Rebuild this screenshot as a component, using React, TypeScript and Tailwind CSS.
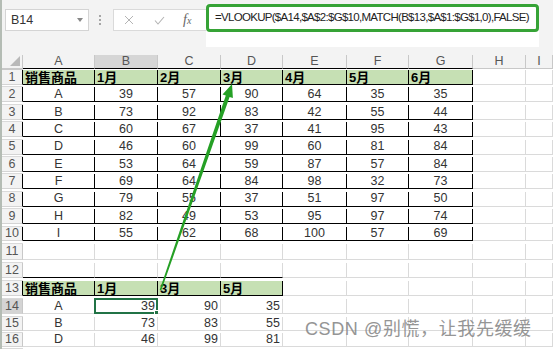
import React from 'react';

const COLS = ['A', 'B', 'C', 'D', 'E', 'F', 'G', 'H', 'I'];

const DATA: (string | number)[][] = [
  ['A', 39, 57, 90, 64, 35, 35],
  ['B', 73, 92, 83, 42, 55, 44],
  ['C', 60, 67, 37, 41, 95, 43],
  ['D', 46, 60, 99, 60, 81, 84],
  ['E', 53, 64, 59, 87, 57, 84],
  ['F', 69, 64, 84, 98, 32, 73],
  ['G', 79, 55, 37, 51, 97, 50],
  ['H', 82, 49, 53, 95, 97, 74],
  ['I', 55, 62, 68, 100, 57, 69],
];

const LOOKUP: (string | number)[][] = [
  ['A', 39, 90, 35],
  ['B', 73, 83, 55],
  ['D', 46, 99, 81],
];

const HEAD_TOP = ['销售商品', '1月', '2月', '3月', '4月', '5月', '6月'];
const HEAD_BOTTOM = ['销售商品', '1月', '3月', '5月'];

const GRID = 'grid grid-cols-[21px_72px_63px_63px_62px_64px_62px_64px_53px_1fr]';

function rowHeight(r: number) {
  if (r <= 10) return 'h-[17.4px]';
  if (r === 11) return 'h-[19px]';
  if (r <= 14) return 'h-[18px]';
  return 'h-[16px]';
}

function Cell({ r, c }: { r: number; c: number }) {
  const inTop = r <= 10 && c <= 6;
  const inBottom = r === 13 && c <= 3;
  const boxed = inTop || inBottom;
  const header = (r === 1 && c <= 6) || inBottom;
  const rightColor = boxed ? 'border-r-black' : 'border-r-[#dadada]';
  const bottomColor = boxed || (r === 12 && c <= 3) ? 'border-b-black' : 'border-b-[#dadada]';
  const bg = header ? 'bg-[#c6e0b4]' : 'bg-white';

  let content: React.ReactNode = null;
  let align = 'justify-center';
  if (r === 1 && c <= 6) {
    content = HEAD_TOP[c];
    align = 'justify-start pl-[2px] font-bold text-[13px] text-black';
  } else if (r >= 2 && r <= 10 && c <= 6) {
    content = DATA[r - 2][c];
  } else if (inBottom) {
    content = HEAD_BOTTOM[c];
    align = 'justify-start pl-[2px] font-bold text-[13px] text-black';
  } else if (r >= 14 && r <= 16 && c <= 3) {
    content = LOOKUP[r - 14][c];
    if (c > 0) align = 'justify-end pr-[2px]';
  }

  return (
    <div className={`relative flex items-center border-r border-b ${rightColor} ${bottomColor} ${bg} ${align}`}>
      <span className="leading-none">{content}</span>
      {r === 14 && c === 1 && (
        <div className="absolute -left-px -top-px -right-px -bottom-px border-2 border-[#217346]">
          <div className="absolute -right-[3px] -bottom-[3px] w-[5px] h-[5px] bg-[#217346] border border-white" />
        </div>
      )}
    </div>
  );
}

function Row({ r }: { r: number }) {
  const headBorder = r <= 10 || r === 13 ? 'border-r-black' : 'border-r-[#c8c8c8]';
  const headBg = r === 14 ? 'bg-[#d4d4d4]' : 'bg-[#f3f3f3]';
  return (
    <div className={`${GRID} ${rowHeight(r)}`}>
      <div className={`flex items-center justify-center border-r border-b border-b-[#d4d4d4] ${headBorder} ${headBg} text-[12.5px] text-[#555] leading-none`}>
        {r}
      </div>
      {COLS.map((_, c) => (
        <Cell key={c} r={r} c={c} />
      ))}
      <div className="border-b border-b-[#dadada] bg-white" />
    </div>
  );
}

function ColumnHeader() {
  return (
    <div className={`${GRID} h-[15px]`}>
      <div className="relative border-r border-b border-[#c8c8c8] bg-[#f3f3f3]">
        <svg className="absolute right-[2px] bottom-[2px]" width="10" height="10" viewBox="0 0 10 10">
          <polygon points="10,0 10,10 0,10" fill="#b9b9b9" />
        </svg>
      </div>
      {COLS.map((col, c) => (
        <div
          key={col}
          className={`flex items-center justify-center border-r border-b text-[12.5px] leading-none text-[#555] ${
            c === 1 ? 'bg-[#d6d6d6]' : 'bg-[#f3f3f3]'
          } ${c <= 6 ? 'border-b-black border-r-[#c8c8c8]' : 'border-[#c8c8c8]'}`}
        >
          {col}
        </div>
      ))}
      <div className="border-b border-[#c8c8c8] bg-[#f3f3f3]" />
    </div>
  );
}

function Toolbar() {
  return (
    <div className="flex h-[55px] items-start bg-[#f3f3f3]">
      <div className="ml-[3px] mt-[9px] flex h-[22px] w-[84px] items-center justify-between border border-[#d4d4d4] bg-white pl-[5px] pr-[5px]">
        <span className="text-[12.5px] leading-none text-[#333]">B14</span>
        <svg width="6" height="4" viewBox="0 0 6 4">
          <polygon points="0,0 6,0 3,4" fill="#888" />
        </svg>
      </div>
      <div className="ml-[10px] mt-[15px] flex flex-col gap-[2px]">
        <div className="h-[2px] w-[2px] bg-[#a6a6a6]" />
        <div className="h-[2px] w-[2px] bg-[#a6a6a6]" />
        <div className="h-[2px] w-[2px] bg-[#a6a6a6]" />
      </div>
      <div className="ml-[12px] mt-[9px] flex h-[22px] w-[93px] items-center border border-r-0 border-[#dadada] bg-white">
        <svg className="ml-[10px]" width="10" height="10" viewBox="0 0 10 10">
          <path d="M1 1 L9 9 M9 1 L1 9" stroke="#b4b4b4" strokeWidth="1" fill="none" />
        </svg>
        <svg className="ml-[20px]" width="11" height="9" viewBox="0 0 11 9">
          <path d="M1 4.5 L4 8 L10 1" stroke="#b4b4b4" strokeWidth="1.1" fill="none" />
        </svg>
        <span className="ml-[18px] font-['Liberation_Serif',serif] italic text-[14px] leading-none text-[#666]">
          f<span className="text-[10px]">x</span>
        </span>
      </div>
      <div className="mt-[4px] h-[43px] w-[333px] bg-white">
        <div className="flex h-[28px] items-center rounded-[4px] border-[3px] border-[#36a336] pl-[6px]">
          <span className="text-[11.5px] leading-none tracking-[-0.7px] text-[#222]">
            =VLOOKUP($A14,$A$2:$G$10,MATCH(B$13,$A$1:$G$1,0),FALSE)
          </span>
        </div>
      </div>
    </div>
  );
}

export default function App() {
  const rows = Array.from({ length: 16 }, (_, i) => i + 1);
  return (
    <div className="relative h-[349px] w-[553px] overflow-hidden border-l-2 border-[#b4bcb4] bg-white font-['Liberation_Sans','Noto_Sans_CJK_SC',sans-serif] text-[12.5px] text-[#333]">
      <Toolbar />
      <ColumnHeader />
      {rows.map((r) => (
        <Row key={r} r={r} />
      ))}

      <svg className="pointer-events-none absolute left-[-2px] top-0" width="553" height="349" viewBox="0 0 553 349">
        <polygon
          points="232,84 232.9,98.1 229.6,97 161.3,290.3 159.7,289.7 225.8,95.6 222.5,94.5"
          fill="#25a025"
        />
      </svg>

      <div className="pointer-events-none absolute left-[303px] top-[320px] text-[18px] leading-none tracking-[0.6px] text-[#8a8a8a] opacity-90">
        CSDN @别慌，让我先缓缓
      </div>
    </div>
  );
}
